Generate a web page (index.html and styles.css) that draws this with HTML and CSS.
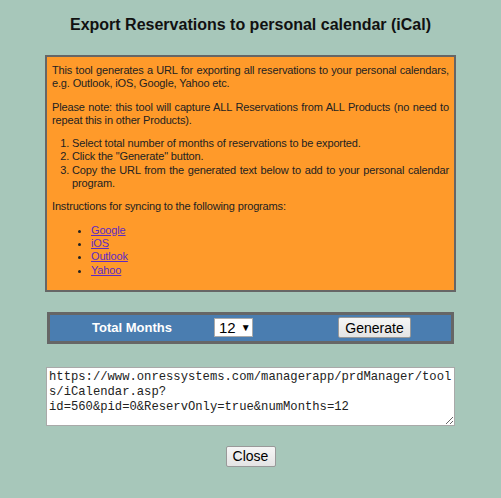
FILE: index.html
```html
<!DOCTYPE html>
<html>
<head>
<meta charset="utf-8">
<title>Export Reservations</title>
<link rel="stylesheet" href="styles.css">
</head>
<body>
<main class="page">
  <h1 class="title">Export Reservations to personal calendar (iCal)</h1>
  <section class="info">
    <p>This tool generates a URL for exporting all reservations to your personal calendars, e.g. Outlook, iOS, Google, Yahoo etc.</p>
    <p>Please note: this tool will capture ALL Reservations from ALL Products (no need to repeat this in other Products).</p>
    <ol class="steps">
      <li>Select total number of months of reservations to be exported.</li>
      <li>Click the "Generate" button.</li>
      <li>Copy the URL from the generated text below to add to your personal calendar program.</li>
    </ol>
    <p>Instructions for syncing to the following programs:</p>
    <ul class="links">
      <li><a href="#">Google</a></li>
      <li><a href="#">iOS</a></li>
      <li><a href="#">Outlook</a></li>
      <li><a href="#">Yahoo</a></li>
    </ul>
  </section>
  <form class="bar">
    <span class="bar-label">Total Months</span>
    <span class="select"><span class="select-value">12</span><span class="select-arrow">▼</span></span>
    <button type="button" class="btn btn-generate">Generate</button>
  </form>
  <textarea class="url" spellcheck="false">https://www.onressystems.com/managerapp/prdManager/tools/iCalendar.asp?id=560&amp;pid=0&amp;ReservOnly=true&amp;numMonths=12</textarea>
  <div class="actions">
    <button type="button" class="btn btn-close">Close</button>
  </div>
</main>
</body>
</html>
```

FILE: styles.css
```css
html, body {
  margin: 0;
  padding: 0;
  background: #a7c7ba;
}

.page {
  width: 411px;
  margin: 0 auto;
  font-family: "Liberation Sans", Arial, sans-serif;
}

.title {
  margin: 0;
  padding-top: 16px;
  font-size: 16px;
  line-height: 18px;
  font-weight: bold;
  text-align: center;
  color: #111;
}

.info {
  margin-top: 21px;
  background: #ff9a2a;
  border: 2px solid #666;
  padding: 7px 5px 3px;
  font-family: "Liberation Sans", Tahoma, sans-serif;
  font-size: 11px;
  letter-spacing: -0.15px;
  line-height: 13.3px;
  color: #222;
  text-align: justify;
}

.info p {
  margin: 0 0 10px;
}

.info ol,
.info ul {
  margin: 0 0 10px;
}

.steps {
  padding-left: 20px;
}

.links {
  padding-left: 39px;
  margin-top: 11px;
  text-align: left;
}

.links a {
  color: #5e2ac2;
}

.bar {
  margin: 20px 2px 0;
  height: 26px;
  border: 3px solid #666;
  background: #4a7db0;
  display: flex;
  align-items: center;
  padding-left: 42px;
}

.bar-label {
  color: #fff;
  font-weight: bold;
  font-size: 13px;
  width: 122px;
}

.select {
  box-sizing: border-box;
  width: 39px;
  height: 19px;
  background: #fff;
  border: 1px solid #aaa;
  display: flex;
  align-items: center;
  padding-left: 4px;
  gap: 5px;
  font-size: 15px;
  color: #000;
}

.select-arrow {
  font-size: 10px;
}

.btn {
  box-sizing: border-box;
  height: 21px;
  padding: 0;
  font-family: "Liberation Sans", Arial, sans-serif;
  font-size: 14px;
  color: #000;
  background: linear-gradient(#f6f6f6, #e4e4e4);
  border: 1px solid #999;
  border-radius: 2px;
}

.btn-generate {
  width: 73px;
  margin-left: 85px;
}

.url {
  display: block;
  box-sizing: border-box;
  width: 409px;
  height: 59px;
  margin: 23px 0 0 1px;
  padding: 2px;
  border: 1px solid #a9a9a9;
  background: #fff;
  font-family: "Liberation Mono", monospace;
  font-size: 12.2px;
  line-height: 15px;
  color: #222;
}

.actions {
  margin-top: 20px;
  display: flex;
  justify-content: center;
}

.btn-close {
  width: 50px;
}
```
